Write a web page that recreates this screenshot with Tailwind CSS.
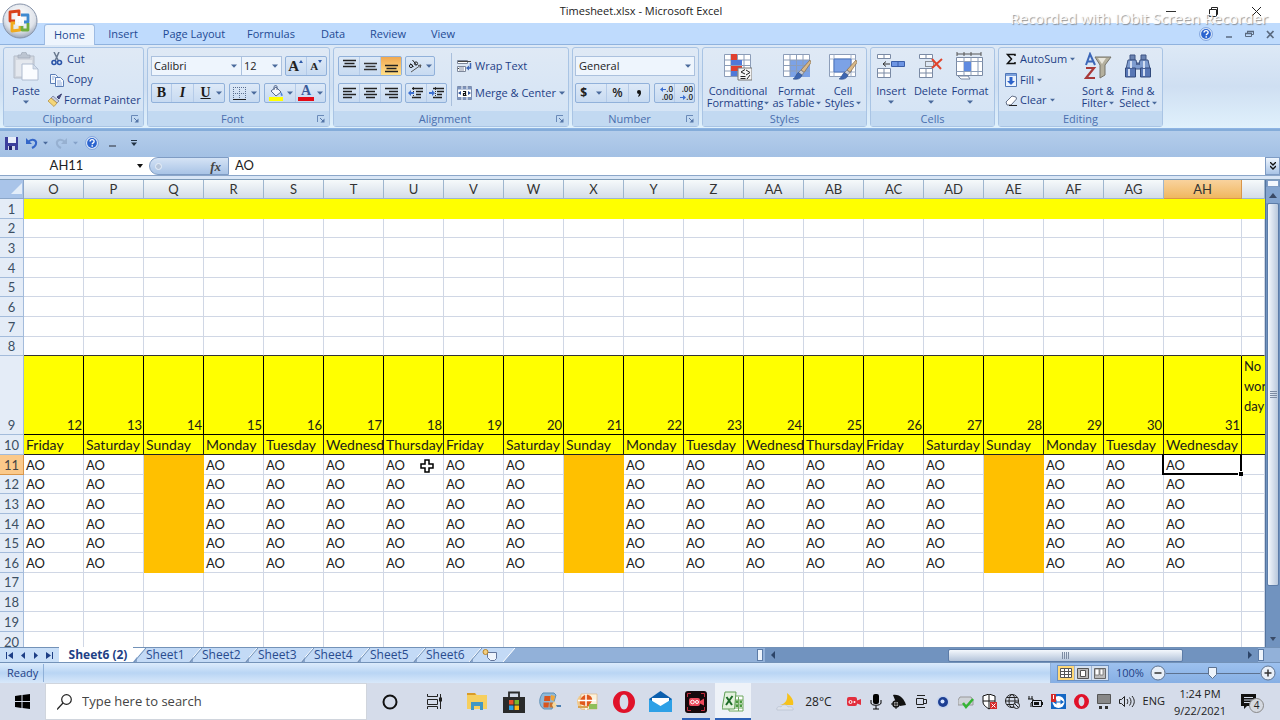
<!DOCTYPE html>
<html lang="en">
<head>
<meta charset="utf-8">
<title>Timesheet.xlsx - Microsoft Excel</title>
<script src="https://cdn.jsdelivr.net/npm/@tailwindcss/browser@4"></script>
</head>
<body class="relative h-screen flex flex-col overflow-hidden bg-white font-['Open_Sans','Noto_Sans',sans-serif] text-[11px] text-[#1e3f86]">

<svg class="hidden">
  <symbol id="dd" viewBox="0 0 6 4"><path d="M0 0.5h6L3 3.7z" fill="#4a6a9c"/></symbol>
  <symbol id="launch" viewBox="0 0 8 8"><path d="M0.5 7V0.5H7" fill="none" stroke="#6a8ab8"/><path d="M3 3l3 3" stroke="#5576a8"/><path d="M7.5 3.5v4h-4z" fill="#5576a8"/></symbol>
  <symbol id="help" viewBox="0 0 16 16"><circle cx="8" cy="8" r="7.3" fill="#e8f1fc" stroke="#6f96d6"/><circle cx="8" cy="8" r="5.6" fill="#2a63cf"/><path d="M5.8 6.4c0-3 4.6-3 4.6-.2 0 1.6-2.2 1.6-2.2 3.2" fill="none" stroke="#fff" stroke-width="1.6"/><rect x="7.4" y="10.5" width="1.7" height="1.7" fill="#fff"/></symbol>
  <symbol id="brush" viewBox="0 0 18 20"><path d="M17 0L8 10l3 2.500 7-10z" fill="#d8b98a" stroke="#8a6b45" stroke-width=".7"/><path d="M8 10l-3 3 3.500 2.500 2.500-3z" fill="#c9ccd2" stroke="#666" stroke-width=".6"/><path d="M5.500 12.500C3.500 13 3 17 0 19c4 1 8 0 9-4z" fill="#3d66b0" stroke="#274780" stroke-width=".5"/></symbol>
</svg>

<!-- Title bar -->
<header class="h-[23px] shrink-0 flex items-center bg-white">
  <div class="flex-1 pl-5"></div>
  <h1 class="text-[11px] text-[#222]">Timesheet.xlsx - Microsoft Excel</h1>
  <div class="flex-1 flex justify-end gap-8 pr-[18px]">
    <button aria-label="Minimize"><svg class="w-[11px] h-[11px]" viewBox="0 0 11 11"><path d="M1 5.500h10" stroke="#333"/></svg></button>
    <button aria-label="Restore"><svg class="w-[11px] h-[11px]" viewBox="0 0 11 11" fill="none" stroke="#222"><path d="M1.500 3.500h7v7h-7zM3.500 3.500v-2h6v7h-1"/></svg></button>
    <button aria-label="Close"><svg class="w-[11px] h-[11px]" viewBox="0 0 11 11"><path d="M1 1l9 9M10 1l-9 9" stroke="#222"/></svg></button>
  </div>
</header>

<!-- Ribbon tabs -->
<nav class="h-[22px] shrink-0 flex items-end bg-[#bfdbfd] border-b border-[#8fb2de] text-[#1e4a94]">
  <button class="ml-[44px] -mb-px h-[21px] w-[51px] rounded-t-[3px] border border-b-0 border-[#9dbbe3] bg-[#eef5fd]">Home</button>
  <button class="h-5 w-[56px]">Insert</button>
  <button class="h-5 w-[86px]">Page Layout</button>
  <button class="h-5 w-[68px]">Formulas</button>
  <button class="h-5 w-[56px]">Data</button>
  <button class="h-5 w-[54px]">Review</button>
  <button class="h-5 w-[56px]">View</button>
  <div class="flex-1"></div>
  <div class="h-5 flex items-center gap-3 pr-[5px]">
    <button aria-label="Help"><svg class="w-[14px] h-[14px]"><use href="#help"/></svg></button>
    <button aria-label="Minimize workbook"><svg class="w-2 h-[9px]" viewBox="0 0 8 9"><path d="M1 7h6" stroke="#5a6a80" stroke-width="1.500"/></svg></button>
    <button aria-label="Restore workbook"><svg class="w-[9px] h-[9px]" viewBox="0 0 9 9" fill="none" stroke="#5a6a80"><path d="M.5 3.500h6v3h-6zM2.500 3V1.500h6v3H7"/><path d="M2 1.500h7M0 3.500h7" stroke-width="1.500"/></svg></button>
    <button aria-label="Close workbook"><svg class="w-[9px] h-[9px]" viewBox="0 0 9 9"><path d="M1 1l6.500 7M7.500 1L1 8" stroke="#5a6a80" stroke-width="1.700"/></svg></button>
  </div>
</nav>

<!-- Ribbon -->
<div class="h-[84px] shrink-0 flex gap-[3px] pl-[3px] pt-[2px] pb-px overflow-hidden bg-linear-to-b from-[#dde9f6] via-[#cfdff2] to-[#e0f1fc] border-b border-[#8db4e3]">

  <section class="w-[141px] shrink-0 flex flex-col rounded-[3px] border border-[#a9c4e4] bg-linear-to-b from-[#dfe9f5] to-[#d3e3f5]">
    <div class="h-[64px] flex">
      <button class="w-[44px] pt-1 flex flex-col items-center">
        <svg class="w-[28px] h-[29px] shrink-0" viewBox="0 0 28 29"><path d="M2 4h20v22H2z" fill="#d3d8e0" stroke="#b5bdc9"/><path d="M4 8h16v16H4z" fill="#e4e8ee"/><path d="M6 6h12V3h-3a3 3 0 00-6 0H6z" fill="#bcc5d1" stroke="#a0aab8" stroke-width=".7"/><path d="M10 12h11l5 5v11H10z" fill="#fafcff" stroke="#aebbd0"/><path d="M21 12v5h5z" fill="#d4deec" stroke="#aebbd0" stroke-width=".7"/></svg>
        <span class="mt-[3px] leading-[13px]">Paste</span>
        <svg class="mt-[3px] w-[6px] h-1"><use href="#dd"/></svg>
      </button>
      <div class="flex-1 pt-px flex flex-col items-start">
        <button class="h-5 flex items-center gap-[3px] pl-[2px]"><svg class="w-[14px] h-[14px]" viewBox="0 0 14 14" fill="none"><path d="M4 0l4.500 9M9 0L5 9" stroke="#68788f" stroke-width="1.500"/><circle cx="4" cy="10.500" r="2" stroke="#2c55a8" stroke-width="1.600"/><circle cx="9.500" cy="10.500" r="2" stroke="#2c55a8" stroke-width="1.600"/></svg>Cut</button>
        <button class="h-[21px] flex items-center gap-[3px] pl-[2px]"><svg class="w-[14px] h-[14px]" viewBox="0 0 14 14" stroke="#5c7eb6"><path d="M.5 1.500h5l2 2v7h-7z" fill="#f4f8fd"/><path d="M5.500 4.500h5l3 3v6h-8z" fill="#f9fbff"/><path d="M2 4h3M2 6h2M7 8h4M7 10h5M7 12h5" stroke="#7e9fd3" stroke-width=".8"/></svg>Copy</button>
        <button class="h-5 flex items-center gap-[2px] whitespace-nowrap"><svg class="w-[14px] h-[14px]" viewBox="0 0 14 14"><path d="M13.500 1L9 4l2 2z" fill="#4a4f86" stroke="#3a3f70"/><path d="M5 3l6 5-2 2-6-5z" fill="#c9cede" stroke="#67709a" stroke-width=".7"/><path d="M3 5L0 8l6 5.500 3-3.500z" fill="#f4d67a" stroke="#b08a35" stroke-width=".7"/></svg>Format Painter</button>
      </div>
    </div>
    <footer class="h-[15px] flex items-center bg-[#c2d9f1] text-[#4a6fae] leading-[14px]"><span class="flex-1 text-center">Clipboard</span><button aria-label="Clipboard options" class="mr-1"><svg class="w-2 h-2"><use href="#launch"/></svg></button></footer>
  </section>

  <section class="w-[183px] shrink-0 flex flex-col rounded-[3px] border border-[#a9c4e4] bg-linear-to-b from-[#dfe9f5] to-[#d3e3f5]">
    <div class="h-[64px] pl-[3px] pt-[8px] flex flex-col gap-[7px]">
      <div class="h-5 flex gap-[3px]">
        <div class="flex">
          <label class="relative"><select aria-label="Font" class="appearance-none w-[91px] h-5 pl-[2px] border border-[#abc1de] bg-[#eef5fd] text-[#222]"><option>Calibri</option></select><svg class="absolute right-[5px] top-2 w-[6px] h-1 pointer-events-none"><use href="#dd"/></svg></label>
          <label class="relative"><select aria-label="Font size" class="appearance-none w-[40px] h-5 pl-[2px] border border-l-0 border-[#abc1de] bg-[#eef5fd] text-[#222]"><option>12</option></select><svg class="absolute right-[4px] top-2 w-[6px] h-1 pointer-events-none"><use href="#dd"/></svg></label>
        </div>
        <div class="flex w-[42px] h-5 rounded-[2px] border border-[#91b1da] bg-linear-to-b from-[#dde9f7] to-[#c7daf1] font-['Liberation_Serif',serif] font-bold text-[#222]">
          <button aria-label="Grow font" class="flex-1 flex items-center justify-center text-[15px] leading-none border-r border-[#b5cbe8]">A<svg class="w-1 h-3" viewBox="0 0 4 12"><path d="M0 3h4L2 0z" fill="#2f5aa8"/></svg></button>
          <button aria-label="Shrink font" class="flex-1 flex items-center justify-center text-[11px] leading-none">A<svg class="w-1 h-3" viewBox="0 0 4 12"><path d="M0 0h4L2 3z" fill="#2f5aa8"/></svg></button>
        </div>
      </div>
      <div class="h-5 flex gap-[4px]">
        <div class="flex w-[74px] rounded-[2px] border border-[#91b1da] bg-linear-to-b from-[#dde9f7] to-[#c7daf1] font-['Liberation_Serif',serif] font-bold text-[14px] leading-none text-[#1a1a1a]">
          <button class="w-5 border-r border-[#b5cbe8]">B</button>
          <button class="w-[22px] border-r border-[#b5cbe8] italic">I</button>
          <button class="flex-1 flex items-center justify-around pl-1"><span class="underline">U</span><svg class="w-[6px] h-1"><use href="#dd"/></svg></button>
        </div>
        <button aria-label="Borders" class="w-[31px] flex items-center justify-around rounded-[2px] border border-[#91b1da] bg-linear-to-b from-[#dde9f7] to-[#c7daf1]"><svg class="w-[13px] h-[13px]" viewBox="0 0 13 13" fill="none" stroke="#5a6f90"><path d="M.5 0v12M6.500 0v12M12.500 0v12M0 .5h13M0 6.500h13" stroke-dasharray="1 1"/><path d="M0 12.500h13" stroke="#222"/></svg><svg class="w-[6px] h-1"><use href="#dd"/></svg></button>
        <div class="flex w-[62px] rounded-[2px] border border-[#91b1da] bg-linear-to-b from-[#dde9f7] to-[#c7daf1]">
          <button aria-label="Fill color" class="flex-1 flex items-center justify-around pl-px border-r border-[#b5cbe8]"><svg class="w-4 h-4" viewBox="0 0 16 16"><path d="M3 6l5-4 5 5-5 4z" fill="#f3f6fb" stroke="#56698c"/><path d="M6 5V1.500c1-1.500 3-1 3 0V5" fill="none" stroke="#56698c"/><path d="M13 7c2 2 2 4 1 4s-2-1-1-4" fill="#4d82d6"/><path d="M1 12h14v4H1z" fill="#ff0"/></svg><svg class="w-[6px] h-1"><use href="#dd"/></svg></button>
          <button aria-label="Font color" class="flex-1 flex items-center justify-around pl-px"><span class="flex flex-col items-center w-4 h-4 border-b-4 border-[#e30b17] font-['Liberation_Serif',serif] font-bold text-[14px] leading-[12px] text-[#3a5a98]">A</span><svg class="w-[6px] h-1"><use href="#dd"/></svg></button>
        </div>
      </div>
    </div>
    <footer class="h-[15px] flex items-center bg-[#c2d9f1] text-[#4a6fae] leading-[14px]"><span class="flex-1 text-center">Font</span><button aria-label="Font options" class="mr-1"><svg class="w-2 h-2"><use href="#launch"/></svg></button></footer>
  </section>

  <section class="w-[236px] shrink-0 flex flex-col rounded-[3px] border border-[#a9c4e4] bg-linear-to-b from-[#dfe9f5] to-[#d3e3f5]">
    <div class="h-[64px] pl-[4px] flex">
      <div class="pt-[8px] w-[113px] flex flex-col gap-[7px]">
        <div class="h-5 flex gap-[3px]">
          <div class="flex w-[64px] rounded-[2px] border border-[#91b1da] bg-linear-to-b from-[#dde9f7] to-[#c7daf1]">
            <button aria-label="Top align" class="flex-1 flex justify-center pt-[2px] border-r border-[#b5cbe8]"><svg class="w-[13px] h-3" viewBox="0 0 13 12"><path d="M0 1.500h13M1.500 4.500h10M0 7.500h13" stroke="#222" stroke-width="1.300"/></svg></button>
            <button aria-label="Middle align" class="flex-1 flex justify-center pt-[4px] border-r border-[#b5cbe8]"><svg class="w-[13px] h-3" viewBox="0 0 13 12"><path d="M0 2.500h13M1.500 5.500h10M0 8.500h13" stroke="#333" stroke-width="1.300"/></svg></button>
            <button aria-label="Bottom align" class="flex-1 flex justify-center pt-[6px] bg-linear-to-b from-[#f0a850] to-[#ffe08a]"><svg class="w-[13px] h-3" viewBox="0 0 13 12"><path d="M0 2.500h13M1.500 5.500h10M0 8.500h13" stroke="#222" stroke-width="1.300"/></svg></button>
          </div>
          <button aria-label="Orientation" class="w-[30px] flex items-center justify-around rounded-[2px] border border-[#91b1da] bg-linear-to-b from-[#dde9f7] to-[#c7daf1]"><svg class="w-[15px] h-[14px]" viewBox="0 0 15 14" fill="none" stroke="#222"><circle cx="3" cy="7" r="1.600"/><path d="M2.500 4.500l3 3.500"/><path d="M4.500 1l4 5"/><circle cx="8" cy="4.500" r="1.600"/><path d="M3 13L13 6M13 6l-3 .5M13 6l-1 3" stroke="#555"/></svg><svg class="w-[6px] h-1"><use href="#dd"/></svg></button>
        </div>
        <div class="h-5 flex gap-[3px]">
          <div class="flex w-[64px] rounded-[2px] border border-[#91b1da] bg-linear-to-b from-[#dde9f7] to-[#c7daf1]">
            <button aria-label="Align left" class="flex-1 flex items-center justify-center border-r border-[#b5cbe8]"><svg class="w-[13px] h-3" viewBox="0 0 13 12"><path d="M0 1.500h13M0 4.500h9M0 7.500h13M0 10.500h9" stroke="#222" stroke-width="1.300"/></svg></button>
            <button aria-label="Center" class="flex-1 flex items-center justify-center border-r border-[#b5cbe8]"><svg class="w-[13px] h-3" viewBox="0 0 13 12"><path d="M0 1.500h13M2 4.500h9M0 7.500h13M2 10.500h9" stroke="#222" stroke-width="1.300"/></svg></button>
            <button aria-label="Align right" class="flex-1 flex items-center justify-center"><svg class="w-[13px] h-3" viewBox="0 0 13 12"><path d="M0 1.500h13M4 4.500h9M0 7.500h13M4 10.500h9" stroke="#222" stroke-width="1.300"/></svg></button>
          </div>
          <div class="flex w-[42px] rounded-[2px] border border-[#91b1da] bg-linear-to-b from-[#dde9f7] to-[#c7daf1]">
            <button aria-label="Decrease indent" class="flex-1 flex items-center justify-center border-r border-[#b5cbe8]"><svg class="w-[15px] h-3" viewBox="0 0 15 12"><path d="M4 1.500h11M8 4.500h7M8 7.500h5M4 10.500h9" stroke="#222" stroke-width="1.300"/><path d="M5.500 0v12" stroke="#333" stroke-dasharray="1 1"/><path d="M0 6l3-3v2h3v2H3v2z" fill="#3c6fd0"/></svg></button>
            <button aria-label="Increase indent" class="flex-1 flex items-center justify-center"><svg class="w-[15px] h-3" viewBox="0 0 15 12"><path d="M4 1.500h11M8 4.500h7M8 7.500h5M4 10.500h9" stroke="#222" stroke-width="1.300"/><path d="M6.500 0v12" stroke="#333" stroke-dasharray="1 1"/><path d="M6 6L3 3v2H0v2h3v2z" fill="#3c6fd0"/></svg></button>
          </div>
        </div>
      </div>
      <div class="my-[5px] border-l border-[#a9bfdc]"></div>
      <div class="pl-[5px] pt-[8px] flex flex-col items-start gap-[7px] whitespace-nowrap">
        <button class="h-5 flex items-center gap-[3px]"><svg class="w-[15px] h-[14px]" viewBox="0 0 15 14"><path d="M.5 1.500h10v3H.5zM.5 7.500h8v5H.5z" fill="#fff" stroke="#7d879a"/><path d="M1 2.500h13M1 9.500h6" stroke="#444"/><path d="M2 8h5v4H2z" fill="#c2c7d2"/><path d="M13.500 4v5h-2" fill="none" stroke="#3c66b8" stroke-width="1.500"/><path d="M9 9l3-2.500v5z" fill="#3c66b8"/></svg>Wrap Text</button>
        <button class="h-5 flex items-center gap-[3px]"><svg class="w-[15px] h-[14px]" viewBox="0 0 15 14"><path d="M.5.5h14v13H.5z" fill="#fff" stroke="#7b8bab"/><path d="M0 1h15v2.500H0zM0 11h15v2.500H0z" fill="#7d93bb"/><path d="M5 0v3M10 0v3M5 11v3M10 11v3" stroke="#fff"/><path d="M1 7l3-2v4zM14 7l-3-2v4z" fill="#2a4f98"/><path d="M6 5.500h2.500v4H6.500v-2h2M8.500 9.500h1" fill="none" stroke="#111" stroke-width="1.200"/></svg>Merge &amp; Center<svg class="w-[6px] h-1"><use href="#dd"/></svg></button>
      </div>
    </div>
    <footer class="h-[15px] flex items-center bg-[#c2d9f1] text-[#4a6fae] leading-[14px]"><span class="flex-1 text-center">Alignment</span><button aria-label="Alignment options" class="mr-1"><svg class="w-2 h-2"><use href="#launch"/></svg></button></footer>
  </section>

  <section class="w-[127px] shrink-0 flex flex-col rounded-[3px] border border-[#a9c4e4] bg-linear-to-b from-[#dfe9f5] to-[#d3e3f5]">
    <div class="h-[64px] pl-[2px] pt-[8px] flex flex-col gap-[7px]">
      <label class="relative h-5"><select aria-label="Number format" class="appearance-none w-[120px] h-5 pl-[3px] border border-[#abc1de] bg-[#eef5fd] text-[#222]"><option>General</option></select><svg class="absolute left-[110px] top-2 w-[6px] h-1 pointer-events-none"><use href="#dd"/></svg></label>
      <div class="h-5 flex gap-[4px]">
        <div class="flex w-[75px] rounded-[2px] border border-[#91b1da] bg-linear-to-b from-[#dde9f7] to-[#c7daf1] text-[#222]">
          <button class="w-[31px] flex items-center justify-around border-r border-[#b5cbe8] font-bold text-[12px]">$<svg class="w-[6px] h-1"><use href="#dd"/></svg></button>
          <button class="w-[22px] border-r border-[#b5cbe8] text-[12px] font-semibold leading-none">%</button>
          <button aria-label="Comma style" class="flex-1 flex items-center justify-center"><svg class="w-1 h-[7px]" viewBox="0 0 4 7"><circle cx="2" cy="2" r="2" fill="#111"/><path d="M4 2c0 3-1 4-3 5l1-3z" fill="#111"/></svg></button>
        </div>
        <div class="flex w-[41px] rounded-[2px] border border-[#91b1da] bg-linear-to-b from-[#dde9f7] to-[#c7daf1] text-[8px] leading-[8px] font-semibold text-[#222]">
          <button class="flex-1 flex flex-col items-end justify-center pr-px border-r border-[#b5cbe8]"><span class="flex items-center"><svg class="w-[6px] h-[5px]" viewBox="0 0 6 5"><path d="M0 2.500L3 0v2h3v1H3v2z" fill="#3c6fd0"/></svg>.0</span><span>.00</span></button>
          <button class="flex-1 flex flex-col items-end justify-center pr-px"><span>.00</span><span class="flex items-center"><svg class="w-[6px] h-[5px]" viewBox="0 0 6 5"><path d="M6 2.500L3 0v2H0v1h3v2z" fill="#3c6fd0"/></svg>.0</span></button>
        </div>
      </div>
    </div>
    <footer class="h-[15px] flex items-center bg-[#c2d9f1] text-[#4a6fae] leading-[14px]"><span class="flex-1 text-center">Number</span><button aria-label="Number options" class="mr-1"><svg class="w-2 h-2"><use href="#launch"/></svg></button></footer>
  </section>

  <section class="w-[165px] shrink-0 flex flex-col rounded-[3px] border border-[#a9c4e4] bg-linear-to-b from-[#dfe9f5] to-[#d3e3f5]">
    <div class="h-[64px] flex justify-between px-[3px] leading-[12px] whitespace-nowrap">
      <button class="w-[64px] pt-1 flex flex-col items-center">
        <svg class="w-[28px] h-[29px] shrink-0" viewBox="0 0 28 29"><path d="M.5 2.500h26v22H.5z" fill="#fff" stroke="#8c9db8"/><path d="M.5 8h26M.5 13.500h26M.5 19h26M7 2.500v22M13.500 2.500v22M20 2.500v22" stroke="#8c9db8"/><path d="M7 2h6v6H7zM7 14h11v5H7z" fill="#e0402f"/><path d="M7 8h11v5H7zM7 19h6v5H7z" fill="#5079d8"/><path d="M14 16h14v12H14z" fill="#f4f4f4" stroke="#777"/><path d="M21 17.500l-4 2.500 4 2M16.500 24.500h5M16.500 26.500h5M22 18l4 2.500-4 2.500M26 23l-3 4" stroke="#222" fill="none"/></svg>
        <span class="mt-1">Conditional</span><span class="flex items-center gap-px">Formatting<svg class="w-[5px] h-1"><use href="#dd"/></svg></span>
      </button>
      <button class="w-[50px] pt-1 flex flex-col items-center">
        <svg class="w-[28px] h-[29px] shrink-0" viewBox="0 0 28 29"><path d="M.5 2.500h26v22H.5z" fill="#fff" stroke="#8c9db8"/><path d="M7 8h20v17H7z" fill="#7ca2e6"/><path d="M.5 8h26M.5 13.500h26M.5 19h26M7 2.500v22M13.500 2.500v22M20 2.500v22" stroke="#8c9db8"/><use href="#brush" x="10" y="8" width="18" height="20"/></svg>
        <span class="mt-1">Format</span><span class="flex items-center gap-px">as Table<svg class="w-[5px] h-1"><use href="#dd"/></svg></span>
      </button>
      <button class="w-[40px] pt-1 flex flex-col items-center">
        <svg class="w-[28px] h-[29px] shrink-0" viewBox="0 0 28 29"><path d="M.5 2.500h26v22H.5z" fill="#fff" stroke="#8c9db8"/><path d="M.5 7h26M.5 20h26M5 2.500v22M22 2.500v22" stroke="#a5b3c9"/><path d="M5 7h17v13H5z" fill="#7ca2e6" stroke="#4d74bd"/><use href="#brush" x="10" y="8" width="18" height="20"/></svg>
        <span class="mt-1">Cell</span><span class="flex items-center gap-[2px]">Styles<svg class="w-[5px] h-1"><use href="#dd"/></svg></span>
      </button>
    </div>
    <footer class="h-[15px] bg-[#c2d9f1] text-[#4a6fae] leading-[15px] text-center">Styles</footer>
  </section>

  <section class="w-[125px] shrink-0 flex flex-col rounded-[3px] border border-[#a9c4e4] bg-linear-to-b from-[#dfe9f5] to-[#d3e3f5]">
    <div class="h-[64px] flex leading-[12px]">
      <button class="w-[40px] pt-1 flex flex-col items-center">
        <svg class="w-[28px] h-[29px] shrink-0" viewBox="0 0 28 29"><g fill="#fff" stroke="#7a8aa4"><path d="M.5 2.500h13v4H.5zM7 2.500v4M.5 16.500h13v9H.5zM7 16.500v9M.5 21h13"/></g><path d="M14.500 9.500h13v5h-13zM21 9.500v5" fill="#6d95e4" stroke="#3a5ea8"/><path d="M6 12h7M6 12l3-2.500M6 12l3 2.500" stroke="#333" fill="none"/></svg>
        <span class="mt-1">Insert</span><svg class="mt-[3px] w-[6px] h-1"><use href="#dd"/></svg>
      </button>
      <button class="w-[39px] pt-1 flex flex-col items-center">
        <svg class="w-[28px] h-[29px] shrink-0" viewBox="0 0 28 29"><g fill="#fff" stroke="#7a8aa4"><path d="M2.500 2.500h13v4h-13zM9 2.500v4M2.500 16.500h13v9h-13zM9 16.500v9M2.500 21h13"/></g><path d="M8.500 9.500h8v5h-8z" fill="none" stroke="#333" stroke-dasharray="1 1"/><path d="M15 7l9 10M25 7l-10 9" stroke="#e0442c" stroke-width="2"/></svg>
        <span class="mt-1">Delete</span><svg class="mt-[3px] w-[6px] h-1"><use href="#dd"/></svg>
      </button>
      <button class="w-[40px] pt-1 flex flex-col items-center">
        <svg class="w-[28px] h-[29px] shrink-0" viewBox="0 0 28 29"><path d="M.5 5.500h26v18H.5z" fill="#fff" stroke="#7a8aa4"/><path d="M.5 9.500h26M.5 19.500h26M8 5.500v18M15 5.500v18M22 5.500v18" stroke="#8c9db8"/><path d="M8 10h7v9H8z" fill="#5f8ae0"/><path d="M1 2h24M1 0v4M8 0v4M15 0v4M25 0v4" stroke="#555"/><path d="M2 24h10l2 3h-9z" fill="#fff" stroke="#7a8aa4"/></svg>
        <span class="mt-1">Format</span><svg class="mt-[3px] w-[6px] h-1"><use href="#dd"/></svg>
      </button>
    </div>
    <footer class="h-[15px] bg-[#c2d9f1] text-[#4a6fae] leading-[15px] text-center">Cells</footer>
  </section>

  <section class="w-[165px] shrink-0 flex flex-col rounded-[3px] border border-[#a9c4e4] bg-linear-to-b from-[#dfe9f5] to-[#d3e3f5]">
    <div class="h-[64px] flex leading-[12px] whitespace-nowrap">
      <div class="w-[79px] pt-px pl-[6px] flex flex-col items-start">
        <button class="h-5 flex items-center gap-[3px]"><svg class="w-3 h-3" viewBox="0 0 12 12"><path d="M10 3V1.500H2.500L6.500 6l-4 4.500H10V9" fill="none" stroke="#111" stroke-width="1.500"/></svg>AutoSum<svg class="w-[5px] h-1"><use href="#dd"/></svg></button>
        <button class="h-[21px] flex items-center gap-[3px]"><svg class="w-3 h-[14px]" viewBox="0 0 12 14"><path d="M.5.5h11v13H.5z" fill="#eaf2fc" stroke="#4f77b8"/><path d="M1 1h10v2H1z" fill="#7ba0dc"/><path d="M4.500 4h3v4H10l-4 4-4-4h2.500z" fill="#2c62c9"/></svg>Fill<svg class="w-[5px] h-1"><use href="#dd"/></svg></button>
        <button class="h-5 flex items-center gap-[3px]"><svg class="w-3 h-[11px]" viewBox="0 0 12 11"><path d="M1 7l6-6 4 1 .5 2L6 10H2z" fill="#fff" stroke="#66728a"/><path d="M4 10.500h8" stroke="#222"/></svg>Clear<svg class="w-[5px] h-1"><use href="#dd"/></svg></button>
      </div>
      <button class="w-[40px] pt-1 flex flex-col items-center">
        <svg class="w-[28px] h-[29px] shrink-0" viewBox="0 0 28 29" fill="none"><path d="M11 5h16l-6 8v10l-5 3V13z" fill="#b4b09e" stroke="#77756a"/><path d="M14 6h8l-4 6z" fill="#e8e6dc"/><path d="M2 13L6 2l5 11M3 9.500h6" stroke="#3b66b8" stroke-width="2"/><path d="M2 16h8L2 26h9" stroke="#a83a3a" stroke-width="2.200"/></svg>
        <span class="mt-1">Sort &amp;</span><span class="flex items-center gap-[2px]">Filter<svg class="w-[5px] h-1"><use href="#dd"/></svg></span>
      </button>
      <button class="w-[40px] pt-1 flex flex-col items-center">
        <svg class="w-[28px] h-[29px] shrink-0" viewBox="0 0 28 29"><path d="M6 3h5v5H6zM17 3h5v5h-5z" fill="#6a83b2" stroke="#3e5584"/><path d="M4 8h8l1 5v-2h2v2l1-5h8l2 9H2z" fill="#7e9ccf" stroke="#3e5584"/><path d="M1.500 16h10v9h-10zM16.500 16h10v9h-10z" fill="#5877b5" stroke="#324a7c"/><path d="M6 9h2v7H6zM19 9h2v7h-2zM4 17h2v7H4zM19 17h2v7h-2z" fill="#d2def2"/></svg>
        <span class="mt-1">Find &amp;</span><span class="flex items-center gap-[2px]">Select<svg class="w-[5px] h-1"><use href="#dd"/></svg></span>
      </button>
    </div>
    <footer class="h-[15px] bg-[#c2d9f1] text-[#4a6fae] leading-[15px] text-center">Editing</footer>
  </section>
</div>

<!-- Quick access toolbar -->
<div class="h-[28px] shrink-0 flex items-center pl-[5px] pb-[2px] border-t-2 border-[#84acd9] bg-linear-to-b from-[#b4cdeb] to-[#a3c0e4]">
  <button aria-label="Save"><svg class="w-[13px] h-[13px]" viewBox="0 0 13 13"><path d="M0 0h13v13H0z" fill="#3c3f9c"/><path d="M3 0h8v6H3z" fill="#e9eefa"/><path d="M3 9h7v4H3z" fill="#cfd6ec"/><path d="M4 9h3v4H4z" fill="#22246a"/></svg></button>
  <button aria-label="Undo" class="ml-[8px] flex items-center gap-[5px]"><svg class="w-3 h-3" viewBox="0 0 12 12"><path d="M2 5c4-4 9-2 8 2-.4 2-2 3-4 4" fill="none" stroke="#3466c8" stroke-width="2"/><path d="M0 1v6h6z" fill="#3466c8"/></svg><svg class="w-[5px] h-1"><use href="#dd"/></svg></button>
  <button aria-label="Redo" class="ml-[7px] flex items-center gap-[6px] opacity-40"><svg class="w-3 h-3" viewBox="0 0 12 12"><path d="M10 5C6 1 1 3 2 7c.4 2 2 3 4 4" fill="none" stroke="#7890b0" stroke-width="2"/><path d="M12 1v6H6z" fill="#7890b0"/></svg><svg class="w-[5px] h-1"><use href="#dd"/></svg></button>
  <button aria-label="Help" class="ml-[7px]"><svg class="w-[14px] h-[14px]"><use href="#help"/></svg></button>
  <button aria-label="Custom command" class="ml-[10px]"><svg class="w-[7px] h-[7px]" viewBox="0 0 7 7"><path d="M0 6h7" stroke="#555f70" stroke-width="1.500"/></svg></button>
  <button aria-label="Customize toolbar" class="ml-[15px]"><svg class="w-[6px] h-[6px]" viewBox="0 0 6 6"><path d="M0 .5h6" stroke="#234"/><path d="M0 2.500h6L3 6z" fill="#234"/></svg></button>
</div>

<!-- Formula bar -->
<div class="h-[19px] shrink-0 flex bg-white border-b border-[#8ba6c9] font-['Lato',sans-serif] text-[13px] text-[#222]">
  <input aria-label="Name box" value="AH11" class="w-[133px] text-center">
  <button aria-label="Name list" class="w-4 flex items-center"><svg class="w-[6px] h-1 ml-[4px]" viewBox="0 0 6 4"><path d="M0 0h6L3 4z" fill="#111"/></svg></button>
  <div class="w-[80px] flex items-center justify-between pl-[5px] pr-[7px] rounded-l-full border border-[#7f9cc4] bg-linear-to-b from-[#d5e3f5] to-[#a9c4e6]">
    <span class="w-[7px] h-[7px] rounded-full bg-[#b9c7da] border border-[#e8f0fa]"></span>
    <button class="font-['Liberation_Serif',serif] italic font-bold text-[13px] leading-none text-[#444]">fx</button>
  </div>
  <input aria-label="Formula" value="AO" class="flex-1 min-w-0 pl-[6px]">
  <button aria-label="Expand formula bar" class="w-[15px] flex items-center justify-center border border-[#7f9cc4] bg-linear-to-b from-[#eef5fd] to-[#a9c4e6]"><svg class="w-[6px] h-2" viewBox="0 0 6 8"><path d="M0 0l3 3 3-3M0 4l3 3 3-3" fill="none" stroke="#111" stroke-width="1.300"/></svg></button>
</div>
<div class="h-[4px] shrink-0 bg-[#d9e6f6] border-b border-[#7f9cb8]"></div>

<!-- Worksheet -->
<main class="flex-1 min-h-0 flex">
  <div class="flex-1 min-w-0 overflow-hidden">
    <table class="table-fixed w-full border-separate border-spacing-0 font-['Lato',sans-serif] text-[13px] leading-[18px] text-[#1a1a1a]">
      <colgroup id="cols"></colgroup>
      <thead id="head"></thead>
      <tbody id="rows"></tbody>
    </table>
  </div>
  <div class="w-[15px] shrink-0 flex flex-col bg-[#7193bf] border-l border-[#54749e]">
    <div class="h-[7px] mx-px bg-[#f2f7fd] border border-[#7f9cc4]"></div>
    <button aria-label="Scroll up" class="h-[16px] flex items-center justify-center bg-[#83a4cf]"><svg class="w-2 h-[5px]" viewBox="0 0 8 5"><path d="M0 5h8L4 0z" fill="#3a4a66"/></svg></button>
    <div class="flex-1 pb-[9px] flex flex-col">
      <div class="flex-1 mx-px flex flex-col items-center justify-center gap-px rounded-[2px] border border-[#5c7ca8] bg-linear-to-r from-[#f4f8fd] to-[#b9c8dc]">
        <span class="w-[7px] h-px bg-[#7d8ca3]"></span><span class="w-[7px] h-px bg-[#7d8ca3]"></span><span class="w-[7px] h-px bg-[#7d8ca3]"></span><span class="w-[7px] h-px bg-[#7d8ca3]"></span>
      </div>
      <div class="h-[36px]"></div>
    </div>
    <button aria-label="Scroll down" class="h-[16px] flex items-center justify-center"><svg class="w-[6px] h-1" viewBox="0 0 6 4"><path d="M0 0h6L3 4z" fill="#3a4a66"/></svg></button>
  </div>
</main>

<!-- Sheet tabs and horizontal scroll bar -->
<div class="h-[16px] shrink-0 flex bg-[#92b1d9] border-y border-[#7392b8] text-[12px] leading-[14px] text-[#284b8e]">
  <div class="w-[59px] flex items-center justify-between pl-[6px] pr-[6px] bg-[#c9dff8]">
    <button aria-label="First sheet"><svg class="w-[7px] h-[7px]" viewBox="0 0 7 7"><path d="M0 0h1v7H0zM7 0v7L2 3.500z" fill="#1e3f86"/></svg></button>
    <button aria-label="Previous sheet"><svg class="w-1 h-[7px]" viewBox="0 0 4 7"><path d="M4 0v7L0 3.500z" fill="#1e3f86"/></svg></button>
    <button aria-label="Next sheet"><svg class="w-1 h-[7px]" viewBox="0 0 4 7"><path d="M0 0v7l4-3.500z" fill="#1e3f86"/></svg></button>
    <button aria-label="Last sheet"><svg class="w-[7px] h-[7px]" viewBox="0 0 7 7"><path d="M6 0h1v7H6zM0 0v7l5-3.500z" fill="#1e3f86"/></svg></button>
  </div>
  <button class="-mt-px w-[74px] pl-[4px] bg-white font-bold text-[#1e3f86] whitespace-nowrap">Sheet6 (2)</button>
  <div id="tabs" class="flex"></div>
  <button aria-label="Insert sheet" class="flex items-center bg-[#c3daf6]"><svg class="w-[46px] h-[14px]" viewBox="0 0 46 14"><path d="M0 14l4-5v5z" fill="#8aa5cc"/><path d="M0 14L12 0" stroke="#fff"/><path d="M1 14L13 0" stroke="#7392b8"/><path d="M34 14L46 0v14z" fill="#92b1d9"/><path d="M34 14L46 0" stroke="#fff"/><path d="M18.500 4.500h9v6l-2 2h-4l-3-3z" fill="#eef4fc" stroke="#63759a"/><circle cx="16.500" cy="4" r="2.500" fill="#f3cf82" stroke="#b8842a"/></svg></button>
  <div class="flex-1"></div>
  <div class="w-[6px] my-px mr-[2px] bg-[#edf4fc] border border-[#5c7ca8]"></div>
  <div class="w-[493px] flex items-center bg-[#7193bf]">
    <button aria-label="Scroll left" class="w-4 flex justify-center"><svg class="w-1 h-2" viewBox="0 0 4 8"><path d="M4 0v8L0 4z" fill="#2c4468"/></svg></button>
    <div class="flex-1 flex justify-end pr-[59px]">
      <div class="w-[235px] h-[13px] flex items-center justify-center gap-px rounded-[2px] border border-[#5c7ca8] bg-linear-to-b from-[#f4f8fd] to-[#b4c4da]"><span class="w-px h-[7px] bg-[#7d8ca3]"></span><span class="w-px h-[7px] bg-[#7d8ca3]"></span><span class="w-px h-[7px] bg-[#7d8ca3]"></span><span class="w-px h-[7px] bg-[#7d8ca3]"></span></div>
    </div>
    <button aria-label="Scroll right" class="w-4 flex justify-center"><svg class="w-1 h-2" viewBox="0 0 4 8"><path d="M0 0v8l4-4z" fill="#2c4468"/></svg></button>
  </div>
  <div class="w-[6px] my-px mr-[16px] bg-[#edf4fc] border border-[#5c7ca8]"></div>
</div>

<!-- Status bar -->
<div class="h-[20px] shrink-0 flex items-center bg-linear-to-b from-[#dcebfc] via-[#b9d5f4] to-[#d8e8fa]">
  <span class="w-[44px] pl-[7px] h-[18px] leading-[17px] border-r border-[#8fb0d8]">Ready</span>
  <div class="flex-1"></div>
  <div class="h-full flex items-center pl-[6px] pr-1 border-l border-[#8fb0d8] bg-linear-to-b from-[#9dc1ee] to-[#86afe4]">
    <div class="flex h-4 w-[52px] border border-[#6d8fbd] bg-[#d5e1f0]">
      <button aria-label="Normal view" class="flex-1 flex items-center justify-center bg-[#ffd978]"><svg class="w-3 h-[10px]" viewBox="0 0 12 10"><path d="M.5.5h11v9H.5zM0 3.500h12M0 6.500h12M4.500 0v10M8.500 0v10" fill="#fff" stroke="#555"/></svg></button>
      <button aria-label="Page layout view" class="flex-1 flex items-center justify-center border-x border-[#9fb4d2]"><svg class="w-3 h-[11px]" viewBox="0 0 12 11"><path d="M.5.5h11v10H.5z" fill="#bbb" stroke="#555"/><path d="M3.500 2.500h5v6h-5z" fill="#fff" stroke="#555"/></svg></button>
      <button aria-label="Page break view" class="flex-1 flex items-center justify-center"><svg class="w-3 h-[11px]" viewBox="0 0 12 11"><path d="M.5.5h11v10H.5z" fill="#bbb" stroke="#666"/><path d="M1 1h4v6H1zM6 1h3v6H6z" fill="#fff" stroke="#666" stroke-width=".7"/></svg></button>
    </div>
    <button class="ml-[7px] w-[27px]">100%</button>
    <button aria-label="Zoom out" class="ml-[7px]"><svg class="w-[16px] h-[16px]" viewBox="0 0 16 16"><circle cx="8" cy="8" r="7" fill="#e8eff8" stroke="#5d7290"/><path d="M4.500 8h7" stroke="#333" stroke-width="1.500"/></svg></button>
    <label class="relative w-[94px] h-4 flex items-center"><span class="w-full h-px bg-[#5d7290]"></span><input type="range" aria-label="Zoom" class="absolute inset-0 w-full opacity-0"><svg class="absolute left-[42px] top-[2px] w-[9px] h-3 pointer-events-none" viewBox="0 0 9 12"><path d="M.5.5h8v7l-4 4-4-4z" fill="#eef4fb" stroke="#5d7290"/></svg></label>
    <button aria-label="Zoom in"><svg class="w-[16px] h-[16px]" viewBox="0 0 16 16"><circle cx="8" cy="8" r="7" fill="#e8eff8" stroke="#5d7290"/><path d="M4.500 8h7M8 4.500v7" stroke="#333" stroke-width="1.500"/></svg></button>
  </div>
</div>

<!-- Taskbar -->
<footer class="h-[37px] shrink-0 flex items-center bg-[#d5dcea] text-[#222]">
  <button aria-label="Start" class="w-[45px] flex justify-center"><svg class="w-[15px] h-[15px]" viewBox="0 0 15 15"><path d="M0 2l6.500-1v6H0zM7.500.9L15 0v7H7.500zM0 8h6.500v6L0 13zM7.500 8H15v7l-7.500-1z" fill="#000"/></svg></button>
  <label class="w-[322px] h-full flex items-center gap-[10px] pl-[11px] bg-white border border-[#d0d5dd]">
    <svg class="w-[15px] h-[16px]" viewBox="0 0 15 16" fill="none" stroke="#222" stroke-width="1.200"><circle cx="9.500" cy="5.500" r="4.800"/><path d="M6 9l-6 6.500"/></svg>
    <input aria-label="Search" placeholder="Type here to search" class="flex-1 min-w-0 text-[13px] placeholder:text-[#444]">
  </label>
  <div class="flex h-full">
    <button aria-label="Cortana" class="w-[45px] flex items-center justify-center"><svg class="w-[16px] h-[16px]" viewBox="0 0 16 16"><circle cx="8" cy="8" r="6.500" fill="none" stroke="#111" stroke-width="2"/></svg></button>
    <button aria-label="Task view" class="w-[45px] flex items-center justify-center"><svg class="w-[15px] h-[15px]" viewBox="0 0 15 15" fill="none" stroke="#222"><path d="M.5 0v2.500h10V0M.5 5.500h10v5H.5zM.5 15v-2.500h10V15M13.500 0v15"/><rect x="12.500" y="4" width="2" height="3" fill="#222"/></svg></button>
    <button aria-label="File Explorer" class="w-[40px] flex items-center justify-center"><svg class="w-[20px] h-[17px]" viewBox="0 0 20 17"><path d="M0 0h8l2 2h10v14H0z" fill="#f6cf5e"/><path d="M0 0h8l1 2H0z" fill="#d99b28"/><path d="M4 9h12v8h-3v-4H7v4H4z" fill="#4097c4"/></svg></button>
    <button aria-label="Microsoft Store" class="w-[34px] flex items-center justify-center"><svg class="w-[22px] h-[22px]" viewBox="0 0 22 22"><path d="M0 6h22v16H0z" fill="#2a2a2a"/><path d="M6 6V1.500h10V6" fill="none" stroke="#2a2a2a" stroke-width="1.800"/><path d="M6 9h4.500v4.500H6z" fill="#e8502a"/><path d="M11.500 9H16v4.500h-4.500z" fill="#7ab72a"/><path d="M6 14.500h4.500V19H6z" fill="#2aa3e6"/><path d="M11.500 14.500H16V19h-4.500z" fill="#fbb914"/></svg></button>
    <button aria-label="Office documents" class="w-[38px] flex items-center justify-center"><svg class="w-[22px] h-[20px]" viewBox="0 0 22 20"><path d="M4 1h11l2 2-4 14H5C-1 14 0 5 4 1z" fill="#8fb9d8" stroke="#5d8fb6"/><path d="M5.500 4h6l-.5 5H5zM4.500 10.500h5.500l-.5 5H4.500z" fill="#d9541e"/><path d="M12 3l4 1-1 5-3-1z" fill="#f0a63a"/><path d="M10.500 10.500h5v5h-5z" fill="#c96f2c"/><path d="M15 9l3 4-3 4-2-4z" fill="#f4d9a0"/><path d="M17 13h5v2h-4z" fill="#4a7fb2"/></svg></button>
    <button aria-label="Office picture manager" class="w-[36px] flex items-center justify-center"><svg class="w-[22px] h-[20px]" viewBox="0 0 22 20"><circle cx="9" cy="10" r="8" fill="#f1c88a"/><path d="M5 2h16v15H5z" fill="#fbf1dc" stroke="#e0b070" stroke-width=".6"/><path d="M9 3c4-1 8 2 7 6l-4 6-8-3c-1-4 2-8 5-9z" fill="#e0571b"/><path d="M10 2v16M2 8.500h18" stroke="#fff" stroke-width="1.500"/><path d="M13 12h8v5h-8z" fill="#8fbf5a"/><path d="M2 15h10" stroke="#d8a050" stroke-width="2"/></svg></button>
    <button aria-label="Opera" class="w-[38px] flex items-center justify-center"><svg class="w-[22px] h-[22px]" viewBox="0 0 22 22"><path fill-rule="evenodd" d="M11 0a11 11 0 100 22 11 11 0 000-22zm0 3.500c2.800 0 4.300 3.400 4.300 7.500s-1.500 7.500-4.300 7.500S6.700 15.100 6.700 11 8.200 3.500 11 3.500z" fill="#e0122a"/></svg></button>
    <button aria-label="Mail" class="w-[34px] flex items-center justify-center"><svg class="w-[23px] h-[21px]" viewBox="0 0 23 21"><path d="M0 8L11.500 0 23 8v13H0z" fill="#0c5fae"/><path d="M3 7h17v8H3z" fill="#fff"/><path d="M0 8l11.500 7L23 8v13H0z" fill="#2da0e6"/></svg></button>
    <button aria-label="Screen recorder" class="w-[28px] ml-[5px] pt-[2px] flex items-center justify-center border-b-2 border-[#2d62b8]"><svg class="w-[22px] h-[22px]" viewBox="0 0 22 22"><rect width="22" height="22" rx="3" fill="#16090c"/><path d="M2.500 6V2.500H6M16 2.500h3.500V6M19.500 16v3.500H16M6 19.500H2.500V16" fill="none" stroke="#c12a3c"/><path d="M4 9a2 2 0 012-2h7a2 2 0 012 2v1l4-2.500v7L15 12.500v.5a2 2 0 01-2 2H6a2 2 0 01-2-2z" fill="#ee4a5c"/><circle cx="7.500" cy="11" r="1.800" fill="none" stroke="#fff"/><circle cx="12" cy="11" r="1.500" fill="none" stroke="#fff"/></svg></button>
    <button aria-label="Excel" class="w-[36px] ml-[5px] pt-[2px] flex items-center justify-center bg-[#eef2f8] border-b-2 border-[#2d62b8]"><svg class="w-[22px] h-[22px]" viewBox="0 0 22 22"><path d="M7 5h14v15H7z" fill="#fff" stroke="#6fa85e"/><path d="M12 9h9M12 13h9M12 17h9M16.500 6v14" stroke="#6fa85e"/><path d="M3 1h11l-1.500 17H0z" fill="#e3f1dd" stroke="#5f9f55"/><path d="M4.500 6l5.500 8M10.500 5L4 14" stroke="#1e6b28" stroke-width="2"/><path d="M13.500 9.500h2.500v2.500h-2.500zM17.500 9.500H20v2.500h-2.500zM13.500 13.500h2.500V16h-2.500zM17.500 13.500H20V16h-2.500z" fill="#4a9a3f"/></svg></button>
  </div>
  <div class="flex-1"></div>
  <button class="flex items-center gap-[9px] text-[12px]"><svg class="w-[20px] h-[18px]" viewBox="0 0 20 18"><path d="M11 0c5 4 7 8 6 12H4c6-1 8-6 7-12z" fill="#f7c21a"/><path d="M1 17c-1-3 2-4 4-3 1-3 6-3 7 0 3-1 6 1 5 3z" fill="#dde2ec" stroke="#b4bccb" stroke-width=".6"/></svg>28°C</button>
  <div class="ml-[15px] flex items-center gap-[8px]">
    <svg class="w-[14px] h-[10px]" viewBox="0 0 14 10"><path d="M0 2a2 2 0 012-2h6a2 2 0 012 2v1.500L14 2v6l-4-1.500V7a2 2 0 01-2 2H2a2 2 0 01-2-2z" fill="#e22f3e"/><circle cx="3.500" cy="5" r="1.500" fill="none" stroke="#fff"/><circle cx="7.500" cy="5" r="1" fill="#fff"/></svg>
    <svg class="w-[14px] h-[16px]" viewBox="0 0 14 16"><rect x="4" width="6" height="10" rx="2" fill="#000"/><path d="M2 6v3c0 3 10 3 10 0V6M7 12v3M4 15h6" fill="none" stroke="#000"/></svg>
    <svg class="w-[15px] h-[15px]" viewBox="0 0 15 15"><path d="M2 1c7-1 11 4 13 10l-6 1L4 6z" fill="#111"/><circle cx="5" cy="10" r="3" fill="#ddd" stroke="#111" stroke-width="1.500"/><path d="M0 10h10M5 5v10" stroke="#111"/></svg>
    <svg class="w-[14px] h-[15px]" viewBox="0 0 14 15" fill="none" stroke="#222"><path d="M3 1.500h8M3 13.500h8M2.500 4.500h7v6h-7zM9.500 5.500h3v4h-3"/></svg>
    <svg class="w-[14px] h-[14px]" viewBox="0 0 14 14"><circle cx="7" cy="7" r="6.500" fill="#c7d4ec"/><circle cx="7" cy="7" r="5" fill="#1d3f93"/><circle cx="6.500" cy="6.500" r="2" fill="#d8e6ff"/></svg>
    <svg class="w-[16px] h-[14px]" viewBox="0 0 16 14"><path d="M2 2h11l2 3v5H0V5z" fill="#cfd3d8" stroke="#999"/><path d="M5 8l3 4 7-8" fill="none" stroke="#35b535" stroke-width="2.500"/></svg>
    <svg class="w-[15px] h-[16px]" viewBox="0 0 15 16"><path d="M7 0l6 2v6c0 3-3 5-6 7-3-2-6-4-6-7V2z" fill="#fff" stroke="#111"/><path d="M7 0v15M1 7h12" stroke="#111"/><path d="M8 8h7v7H8z" fill="#d42a2a"/><path d="M9.500 9.500l4 4M13.500 9.500l-4 4" stroke="#fff"/></svg>
    <svg class="w-[15px] h-[15px]" viewBox="0 0 15 15" fill="none" stroke="#222"><circle cx="7" cy="7" r="6.500"/><path d="M.5 7h13M2 3.500h10M2 10.500h7"/><ellipse cx="7" cy="7" rx="3" ry="6.500"/><circle cx="11.500" cy="11.500" r="3" fill="#d5dcea"/><path d="M9.500 9.500l4 4"/></svg>
    <svg class="w-[15px] h-[12px]" viewBox="0 0 15 12"><path d="M4.500 4.500h9v6h-9z" fill="none" stroke="#111"/><path d="M6 6h5v3H6zM14 6h1v3h-1z" fill="#111"/><path d="M1 0v3M4 0v3M0 3h5v2L3 7v4" fill="none" stroke="#111"/></svg>
    <svg class="w-[15px] h-[15px]" viewBox="0 0 15 15"><path d="M0 0h15v15H0z" fill="#1467c4"/><circle cx="7.500" cy="8" r="6" fill="#fff"/><path d="M2 8l3.500-2.500v2h4v-2L13 8l-3.500 2.500v-2h-4v2z" fill="#1467c4"/><path d="M0 0h5v8H0z" fill="#d42a2a"/><path d="M2.500 1v4" stroke="#fff"/></svg>
    <svg class="w-[15px] h-[15px]" viewBox="0 0 22 22"><path fill-rule="evenodd" d="M11 0a11 11 0 100 22 11 11 0 000-22zm0 4c2.800 0 4.300 3.400 4.300 7s-1.500 7-4.300 7-4.300-3.400-4.300-7S8.200 4 11 4z" fill="#e0122a"/></svg>
    <svg class="w-[14px] h-[15px]" viewBox="0 0 14 15"><path d="M.5.5h13v9H.5z" fill="#888" stroke="#555"/><path d="M2 12h3v3H2zM8 12h3v3H8z" fill="#333"/></svg>
    <svg class="w-[16px] h-[13px]" viewBox="0 0 16 13" fill="none" stroke="#222"><path d="M.5 4.500h2l3-3v10l-3-3h-2zM8 4c1 1.500 1 3.500 0 5M10.500 2.500c2 2.500 2 5.500 0 8M13 1c3 3.500 3 7.500 0 11"/></svg>
  </div>
  <button class="ml-[8px] text-[11px]">ENG</button>
  <button class="ml-[9px] w-[52px] flex flex-col items-center text-[11px] leading-[17px]"><span class="whitespace-nowrap">1:24 PM</span><span>9/22/2021</span></button>
  <button aria-label="4 notifications" class="relative ml-[15px] mr-[16px] w-[23px] h-[22px]">
    <svg class="w-[16px] h-[16px]" viewBox="0 0 16 16"><path d="M0 0h15v12H6l-3 3v-3H0z" fill="#111"/><path d="M3 3.500h9M3 6h9M3 8.500h7" stroke="#d5dcea"/></svg>
    <span class="absolute right-0 bottom-0 w-[15px] h-[15px] rounded-full border border-[#888] bg-[#d5d9e0] text-[10px] leading-[13px] text-center">4</span>
  </button>
</footer>

<!-- Office button -->
<button aria-label="Office Button" class="absolute left-[2px] top-[3px]"><svg class="w-[36px] h-[36px]" viewBox="0 0 36 36"><defs><radialGradient id="orb" cx=".5" cy=".35" r=".65"><stop offset="0" stop-color="#fff"/><stop offset=".7" stop-color="#dfe3ea"/><stop offset="1" stop-color="#9aa6b8"/></radialGradient></defs><circle cx="18" cy="18" r="17" fill="url(#orb)" stroke="#8794aa"/><g fill="none" stroke-width="2.800" stroke-linejoin="round"><path d="M13 18H8V9l9-1v5" stroke="#d9421c"/><path d="M19 12h7v7h-4" stroke="#3f8ad0"/><path d="M13 20h-3v8l8-1v-4" stroke="#f0ab1e"/><path d="M26 20v7h-6v-4" stroke="#6fae3c"/></g><path d="M15 15h6v6h-6zM15 18h7M18 14v8" fill="none" stroke="#fff" stroke-width="1.200"/></svg></button>

<!-- Recorder watermark -->
<p class="absolute right-[12px] top-[8px] text-[15px] leading-5 whitespace-nowrap text-white/90 [text-shadow:1px_1px_1px_rgb(120_120_120/0.8)] pointer-events-none">Recorded with IObit Screen Recorder</p>

<script>
  const letters = ['O','P','Q','R','S','T','U','V','W','X','Y','Z','AA','AB','AC','AD','AE','AF','AG','AH',''];
  const days = ['Friday','Saturday','Sunday','Monday','Tuesday','Wednesday','Thursday'];
  const LAST = 19, EXTRA = 20;

  document.getElementById('cols').innerHTML = '<col class="w-[24px]">' +
    letters.map((l, i) => i < LAST ? '<col class="w-[60px]">' : i === LAST ? '<col class="w-[78px]">' : '<col>').join('');

  document.getElementById('head').innerHTML =
    '<tr class="h-[19px]"><td class="p-0 bg-[#a9c4e9] border-r border-b border-[#8ba6c9]"><svg class="ml-auto w-3 h-3" viewBox="0 0 12 12"><path d="M11 0v11H0z" fill="#e3edf9"/></svg></td>' +
    letters.map((l, i) => i === LAST
      ? '<th scope="col" class="p-0 font-normal border-r border-b border-[#d9964a] bg-linear-to-b from-[#f9d29d] to-[#f0b75e] text-[#333]">' + l + '</th>'
      : '<th scope="col" class="p-0 font-normal border-r border-b border-[#9eb6ce] bg-linear-to-b from-[#f6fafb] to-[#d5dde8] text-[#333]">' + l + '</th>').join('') + '</tr>';

  const selection = '<span class="absolute -left-[2px] -right-px -top-px -bottom-px border-2 border-t border-black pointer-events-none"></span><span class="absolute -right-[2px] -bottom-[2px] w-[5px] h-[5px] bg-black border-t border-l border-white"></span>';
  const pointer = '<svg class="absolute left-[36px] top-[4px] w-[14px] h-[14px] pointer-events-none" viewBox="0 0 14 14"><path d="M5 1h4v4h4v4H9v4H5V9H1V5h4z" fill="#fff" stroke="#000" stroke-width="1.500"/></svg>';
  const shortRows = [2, 5, 8, 12, 15, 17];

  let html = '';
  for (let r = 1; r <= 20; r++) {
    const height = r === 9 ? 'h-[79px]' : shortRows.includes(r) ? 'h-[19px]' : 'h-[20px]';
    html += '<tr class="' + height + '">';
    html += r === 11
      ? '<th scope="row" class="p-0 font-normal border-r border-b border-[#d9964a] bg-[#fbc98a] text-[#444]">11</th>'
      : '<th scope="row" class="p-0 font-normal align-bottom border-r border-b border-[#a3bbdb] bg-[#e4ecf7] text-[#3c4f63]">' + r + '</th>';
    for (let c = 0; c <= EXTRA; c++) {
      const sunday = c % 7 === 2;
      if (r === 1) html += '<td class="p-0 bg-[#ffff00]"></td>';
      else if (r === 8) html += '<td class="p-0 border-r border-b border-r-[#d0d7e5] border-b-[#333]"></td>';
      else if (r === 9 && c === EXTRA) html += '<td class="p-0 pl-[2px] align-top overflow-hidden whitespace-nowrap leading-[20px] bg-[#ffff00] border-b border-black">No<br>wor<br>day</td>';
      else if (r === 9) html += '<td class="p-0 pr-px align-bottom text-right bg-[#ffff00] border-r border-b border-black">' + (12 + c) + '</td>';
      else if (r === 10 && c === EXTRA) html += '<td class="p-0 bg-[#ffff00] border-b border-[#222]"></td>';
      else if (r === 10) html += '<td class="p-0 pl-[2px] text-[14px] overflow-hidden whitespace-nowrap bg-[#ffff00] border-r border-b border-[#222]">' + days[c % 7] + '</td>';
      else if (r > 10 && r < 17 && sunday) html += '<td class="p-0 bg-[#ffc000]"></td>';
      else if (r === 11 && c === LAST) html += '<td class="relative p-0 pl-[2px] border-r border-b border-[#d0d7e5]">AO' + selection + '</td>';
      else if (r === 11 && c === 6) html += '<td class="relative p-0 pl-[2px] border-r border-b border-[#d0d7e5]">AO' + pointer + '</td>';
      else if (r > 10 && r < 17 && c < EXTRA) html += '<td class="p-0 pl-[2px] border-r border-b border-[#d0d7e5]">AO</td>';
      else html += '<td class="p-0 border-r border-b border-[#d0d7e5]"></td>';
    }
    html += '</tr>';
  }
  document.getElementById('rows').innerHTML = html;

  document.getElementById('tabs').innerHTML = ['Sheet1','Sheet2','Sheet3','Sheet4','Sheet5','Sheet6'].map((name, i) =>
    '<button class="w-[56px] flex items-center bg-[#c3daf6]"><svg class="w-[13px] h-[14px] shrink-0" viewBox="0 0 13 14">' +
    (i ? '<path d="M0 14L12 0" stroke="#fff"/>' : '<path d="M0 0h12L0 14z" fill="#fff"/>') +
    '<path d="M0 14l4-5v5z" fill="#8aa5cc"/><path d="M1 14L13 0" stroke="#7392b8"/></svg>' + name + '</button>').join('');
</script>
</body>
</html>
